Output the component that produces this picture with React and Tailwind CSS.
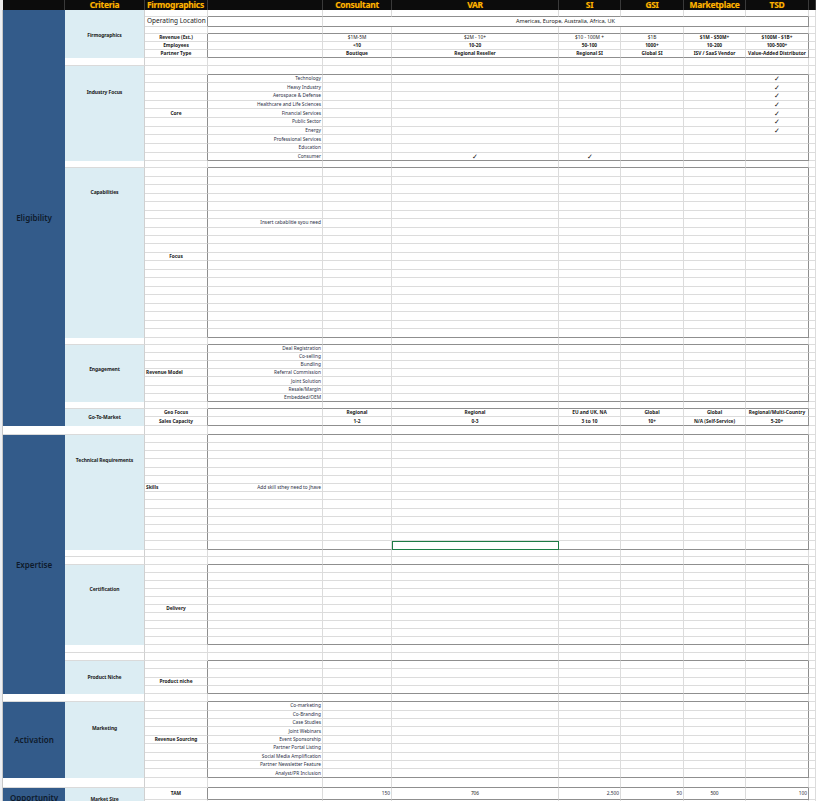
import React from "react";

const rowH = [10, 7, 10, 7, 8, 8, 8, 8];
for (let i = 0; i < 11; i++) rowH.push(8.66);
rowH.push(7);
for (let i = 0; i < 20; i++) rowH.push(8.47);
rowH.push(7);
for (let i = 0; i < 7; i++) rowH.push(8.2);
rowH.push(7, 8.5, 8.5, 9);
for (let i = 0; i < 14; i++) rowH.push(8.2);
rowH.push(7.5, 7.5);
for (let i = 0; i < 10; i++) rowH.push(8.05);
rowH.push(8, 8);
for (let i = 0; i < 4; i++) rowH.push(8.3);
rowH.push(8);
for (let i = 0; i < 9; i++) rowH.push(8.4);
rowH.push(10, 12, 8);
const NR = rowH.length;

const boxes = [[2, 2], [4, 6], [9, 18], [20, 39], [41, 47], [49, 50], [52, 65], [68, 77], [80, 83], [85, 93], [95, 95]];
const inBox = (r) => boxes.some(([a, b]) => r >= a && r <= b);
const boxLast = (r) => boxes.some(([a, b]) => r === b);
const boxFirst = (r) => boxes.some(([a]) => r === a);

const A = [
  { a: 1, b: 50, t: "Eligibility" },
  { a: 51, b: 51, t: "" },
  { a: 52, b: 83, t: "Expertise" },
  { a: 84, b: 84, t: "" },
  { a: 85, b: 93, t: "Activation" },
  { a: 94, b: 94, t: "" },
  { a: 95, b: 96, t: "Opportunity" },
];
const B = [
  { a: 1, b: 6, t: "Firmographics", p: "pt-[23px]" },
  { a: 7, b: 7 },
  { a: 8, b: 18, t: "Industry Focus", p: "pt-[24px]" },
  { a: 19, b: 19 },
  { a: 20, b: 39, t: "Capabilities", p: "pt-[22px]" },
  { a: 40, b: 40 },
  { a: 41, b: 47, t: "Engagement", p: "pt-[22px]" },
  { a: 48, b: 48 },
  { a: 49, b: 50, t: "Go-To-Market", p: "pt-[6px]" },
  { a: 51, b: 51 },
  { a: 52, b: 65, t: "Technical Requirements", p: "pt-[23px]" },
  { a: 66, b: 66 },
  { a: 67, b: 67 },
  { a: 68, b: 77, t: "Certification", p: "pt-[22px]" },
  { a: 78, b: 78 },
  { a: 79, b: 79 },
  { a: 80, b: 83, t: "Product Niche", p: "pt-[14px]" },
  { a: 84, b: 84 },
  { a: 85, b: 93, t: "Marketing", p: "pt-[24px]" },
  { a: 94, b: 94 },
  { a: 95, b: 96, t: "Market Size", p: "pt-[9px]" },
];

const cells = {};
const put = (r, c, t, k = "c", b = false) => (cells[`${r},${c}`] = { t, k, b });
put(2, 3, "Operating Location", "op");
["Revenue (Est.)", "Employees", "Partner Type"].forEach((t, i) => put(4 + i, 3, t, "c", true));
const rev = ["$1M-5M", "$2M - 10+", "$10 - 100M +", "$1B", "$1M - $50M+", "$100M - $1B+"];
const emp = ["<10", "10-20", "50-100", "1000+", "10-200", "100-500+"];
const pt = ["Boutique", "Regional Reseller", "Regional SI", "Global SI", "ISV / SaaS Vendor", "Value-Added Distributor"];
rev.forEach((t, i) => put(4, 5 + i, t, "c", i >= 4));
emp.forEach((t, i) => put(5, 5 + i, t, "c", true));
pt.forEach((t, i) => put(6, 5 + i, t, "c", true));
["Technology", "Heavy Industry", "Aerospace & Defense", "Healthcare and Life Sciences", "Financial Services", "Public Sector", "Energy", "Professional Services", "Education", "Consumer"].forEach((t, i) => put(9 + i, 4, t, "r"));
put(13, 3, "Core", "c", true);
for (let r = 9; r <= 15; r++) put(r, 10, "✓", "chk");
put(18, 6, "✓", "chk");
put(18, 7, "✓", "chk");
put(26, 4, "Insert cabablitie syou need", "r");
put(30, 3, "Focus", "c", true);
["Deal Registration", "Co-selling", "Bundling", "Referral Commission", "Joint Solution", "Resale/Margin", "Embedded/OEM"].forEach((t, i) => put(41 + i, 4, t, "r"));
put(44, 3, "Revenue Model", "l", true);
put(49, 3, "Geo Focus", "c", true);
put(50, 3, "Sales Capacity", "c", true);
["Regional", "Regional", "EU and UK, NA", "Global", "Global", "Regional/Multi-Country"].forEach((t, i) => put(49, 5 + i, t, "c", true));
["1-2", "0-3", "3 to 10", "10+", "N/A (Self-Service)", "5-20+"].forEach((t, i) => put(50, 5 + i, t, "c", true));
put(58, 3, "Skills", "l", true);
put(58, 4, "Add skill sthey need to jhave", "r");
put(73, 3, "Delivery", "c", true);
put(82, 3, "Product niche", "c", true);
["Co-marketing", "Co-Branding", "Case Studies", "Joint Webinars", "Event Sponsorship", "Partner Portal Listing", "Social Media Amplification", "Partner Newsletter Feature", "Analyst/PR Inclusion"].forEach((t, i) => put(85 + i, 4, t, "r"));
put(89, 3, "Revenue Sourcing", "c", true);
put(95, 3, "TAM", "c", true);
put(95, 5, "150", "r");
put(95, 6, "706", "c");
put(95, 7, "2,500", "r");
put(95, 8, "50", "r");
put(95, 9, "500", "c");
put(95, 10, "100", "r");

const headers = ["", "Criteria", "Firmographics", "", "Consultant", "VAR", "SI", "GSI", "Marketplace", "TSD", ""];

export default function App() {
  const items = [];
  headers.forEach((h, i) => {
    items.push(
      <div
        key={"h" + i}
        style={{ gridRow: "1", gridColumn: `${i + 2}` }}
        className={`bg-[#0c0c0c] border-r border-[#3a3a3a] flex items-center whitespace-nowrap ${i === 2 ? "justify-start pl-[2px]" : "justify-center"} text-[8.5px] font-bold tracking-[-0.3px] text-[#ffb400] [text-shadow:0_0_1px_#6b4000] leading-none font-['Liberation_Sans']`}
      >
        {h}
      </div>
    );
  });
  items.push(<div key="h0" style={{ gridRow: "1", gridColumn: "1" }} className="bg-[#e9e9e9]" />);
  items.push(<div key="strip" style={{ gridRow: `2 / ${NR + 1}`, gridColumn: "1" }} className="bg-[#eef0f3] border-r border-[#c8c8c8]" />);
  A.forEach((s, i) =>
    items.push(
      <div
        key={"a" + i}
        style={{ gridRow: `${s.a + 1} / ${s.b + 2}`, gridColumn: "2" }}
        className={`${s.t ? "bg-[#335b8a]" : "bg-white border-b border-[#dadada]"} flex items-center justify-center text-[8px] text-[#0e1a2b] font-['Open_Sans'] font-semibold leading-none`}
      >
        {s.t}
      </div>
    )
  );
  B.forEach((s, i) =>
    items.push(
      <div
        key={"b" + i}
        style={{ gridRow: `${s.a + 1} / ${s.b + 2}`, gridColumn: "3" }}
        className={`${s.t ? "bg-[#dcedf3]" : "bg-white border-b border-[#dadada]"} border-r border-r-[#d0d0d0] flex flex-col items-center ${s.p || ""} text-[5px] font-bold text-[#222] leading-none font-['Liberation_Sans'] tracking-[-0.1px]`}
      >
        {s.t}
      </div>
    )
  );
  for (let r = 1; r < NR; r++) {
    for (let c = 3; c <= 11; c++) {
      if (r === 2 && c >= 6 && c <= 10) continue;
      let span = 1;
      if (r === 2 && c === 5) span = 6;
      const lastC = c + span - 1;
      const darkB = (boxLast(r) || boxFirst(r + 1)) && c >= 4 && c <= 10;
      const darkR = inBox(r) && (lastC === 3 || lastC === 10);
      const cell = r === 2 && c === 5 ? { t: "Americas, Europe, Australia, Africa, UK", k: "c" } : cells[`${r},${c}`];
      const sel = r === 65 && c === 6;
      let align = "justify-center";
      let txt = "text-[4.8px] text-[#1a1a1a] font-['Liberation_Sans']";
      if (cell) {
        if (cell.k === "r") { align = "justify-end pr-[1px]"; txt = "text-[4.8px] text-[#2a2f45] font-['Liberation_Sans']"; }
        if (cell.k === "l") { align = "justify-start pl-[1px]"; }
        if (cell.k === "op") { align = "justify-start pl-[2px]"; txt = "text-[6.5px] text-[#222] font-['Liberation_Sans']"; }
        if (cell.k === "chk") { txt = "text-[7px] text-[#111] font-['DejaVu_Sans']"; }
        if (r === 2 && c === 5) txt = "text-[5.5px] text-[#222] font-['Liberation_Sans']";
      }
      items.push(
        <div
          key={r + "-" + c}
          style={{ gridRow: `${r + 1}`, gridColumn: `${c + 1} / span ${span}` }}
          className={`bg-white border-r border-b overflow-visible whitespace-nowrap flex items-center leading-none ${align} ${txt} ${cell && cell.b ? "font-bold" : ""} ${darkB ? "border-b-[#8f8f8f]" : "border-b-[#dcdcdc]"} ${darkR ? "border-r-[#8f8f8f]" : "border-r-[#dcdcdc]"} ${sel ? "outline outline-[1.5px] outline-[#1e7b45] -outline-offset-1" : ""}`}
        >
          {cell ? cell.t : ""}
        </div>
      );
    }
  }
  return (
    <div className="w-[816px] h-[801px] overflow-hidden bg-white">
      <div
        className="grid grid-cols-[3px_62px_80px_63px_115px_69px_167px_62px_63px_62px_63px_7px]"
        style={{ gridTemplateRows: rowH.map((h) => h + "px").join(" ") }}
      >
        {items}
      </div>
    </div>
  );
}
